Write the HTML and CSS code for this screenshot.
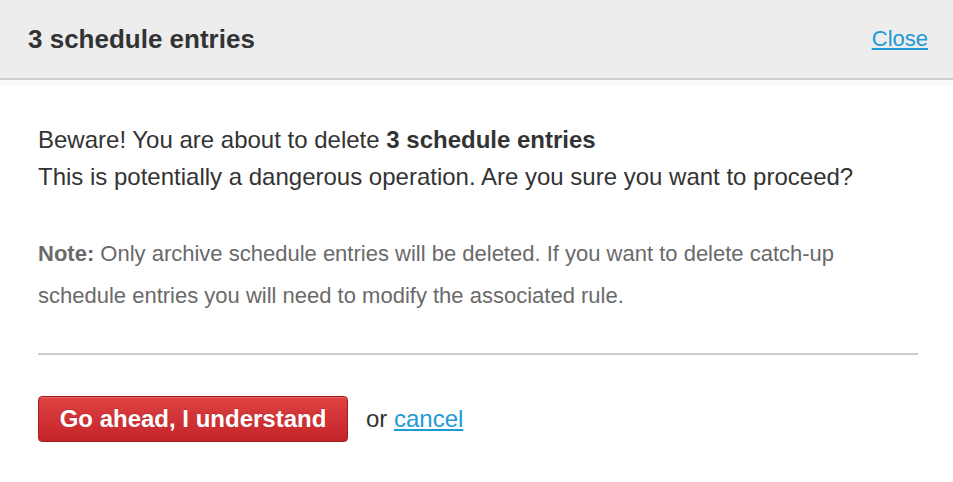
FILE: index.html
```html
<!DOCTYPE html>
<html>
<head>
<meta charset="utf-8">
<link rel="stylesheet" href="styles.css">
</head>
<body>
<div class="dialog">
  <div class="header">
    <h1 class="title">3 schedule entries</h1>
    <a class="close" href="#">Close</a>
  </div>
  <div class="content">
    <p class="warning">Beware! You are about to delete <strong>3 schedule entries</strong><br>This is potentially a dangerous operation. Are you sure you want to proceed?</p>
    <p class="note"><strong>Note:</strong> Only archive schedule entries will be deleted. If you want to delete catch-up schedule entries you will need to modify the associated rule.</p>
    <hr class="divider">
    <div class="actions">
      <button class="danger">Go ahead, I understand</button>
      <span class="or">or <a href="#" class="cancel">cancel</a></span>
    </div>
  </div>
</div>
</body>
</html>
```

FILE: styles.css
```css
html, body {
  margin: 0;
  padding: 0;
  background: #fff;
}
body {
  font-family: "Liberation Sans", Arial, sans-serif;
  color: #333;
}
.dialog {
  width: 953px;
}
.header {
  height: 78px;
  background: #ededed;
  border-bottom: 2px solid #d0d0d0;
  display: flex;
  align-items: center;
  justify-content: space-between;
  padding: 0 25px 0 28px;
  box-sizing: content-box;
}
.title {
  margin: 0;
  font-size: 26px;
  font-weight: bold;
  color: #333;
}
.close {
  font-size: 22px;
  color: #1e9ad6;
  text-decoration: underline;
}
.content {
  border-top: 6px solid #fafafa;
  padding: 35px 35px 0 38px;
}
.warning {
  margin: 0;
  font-size: 24px;
  line-height: 37px;
  color: #333;
}
.note {
  margin: 38px 0 0;
  font-size: 22px;
  line-height: 42px;
  color: #6a6a6a;
  width: 820px;
}
.divider {
  margin: 36px 0 0;
  border: 0;
  height: 2px;
  background: #cccccc;
}
.actions {
  display: flex;
  align-items: center;
  margin-top: 41px;
}
.danger {
  font-family: "Liberation Sans", Arial, sans-serif;
  font-size: 24px;
  font-weight: bold;
  color: #fff;
  background: linear-gradient(#de4242, #c3242a);
  border: 1px solid #a51c1c;
  border-radius: 4px;
  height: 46px;
  width: 310px;
  padding: 0;
  box-shadow: inset 0 1px 0 rgba(255,255,255,0.2);
  text-shadow: 0 -1px 0 rgba(0,0,0,0.15);
}
.or {
  margin-left: 18px;
  font-size: 24px;
  color: #333;
}
.cancel {
  color: #1e9ad6;
}
```
